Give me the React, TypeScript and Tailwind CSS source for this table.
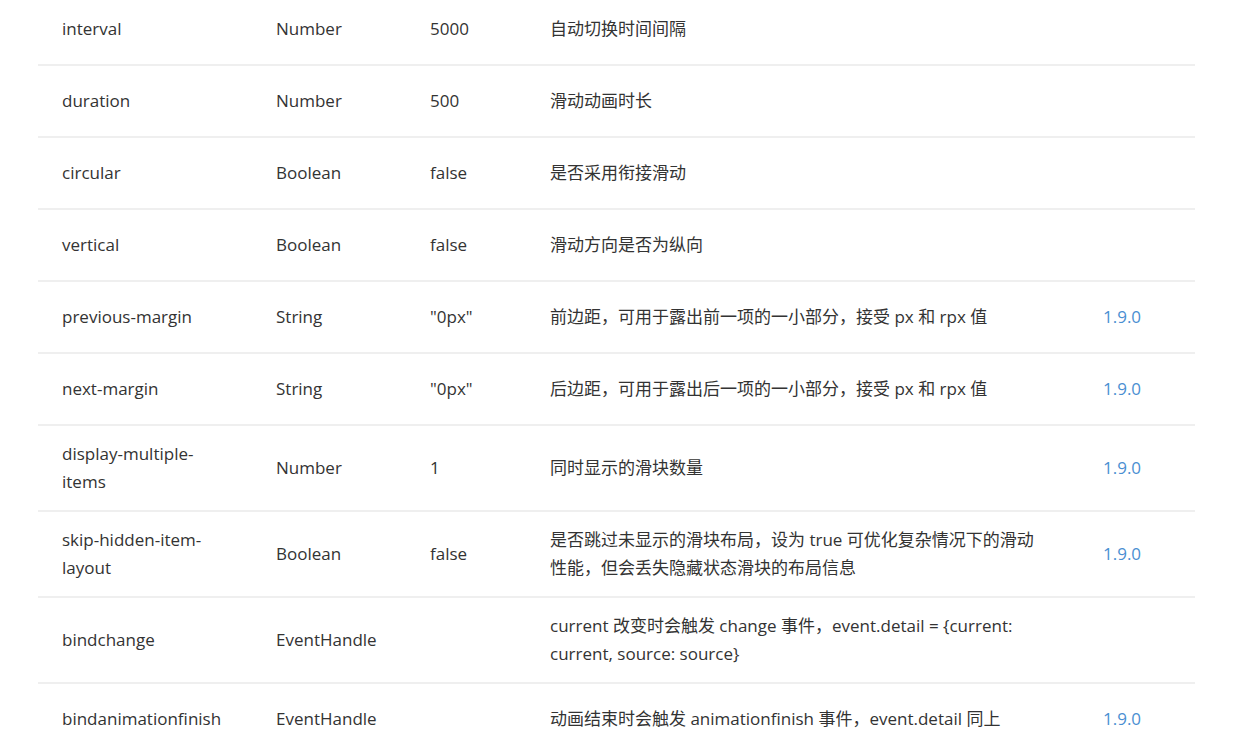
const rows = [
  { name: "interval", type: "Number", def: "5000", desc: "自动切换时间间隔", ver: "" },
  { name: "duration", type: "Number", def: "500", desc: "滑动动画时长", ver: "" },
  { name: "circular", type: "Boolean", def: "false", desc: "是否采用衔接滑动", ver: "" },
  { name: "vertical", type: "Boolean", def: "false", desc: "滑动方向是否为纵向", ver: "" },
  {
    name: "previous-margin",
    type: "String",
    def: '"0px"',
    desc: "前边距，可用于露出前一项的一小部分，接受 px 和 rpx 值",
    ver: "1.9.0",
  },
  {
    name: "next-margin",
    type: "String",
    def: '"0px"',
    desc: "后边距，可用于露出后一项的一小部分，接受 px 和 rpx 值",
    ver: "1.9.0",
  },
  { name: "display-multiple-items", type: "Number", def: "1", desc: "同时显示的滑块数量", ver: "1.9.0" },
  {
    name: "skip-hidden-item-layout",
    type: "Boolean",
    def: "false",
    desc: "是否跳过未显示的滑块布局，设为 true 可优化复杂情况下的滑动性能，但会丢失隐藏状态滑块的布局信息",
    ver: "1.9.0",
  },
  {
    name: "bindchange",
    type: "EventHandle",
    def: "",
    desc: "current 改变时会触发 change 事件，event.detail = {current: current, source: source}",
    ver: "",
  },
  {
    name: "bindanimationfinish",
    type: "EventHandle",
    def: "",
    desc: "动画结束时会触发 animationfinish 事件，event.detail 同上",
    ver: "1.9.0",
  },
];

export default function App() {
  return (
    <div
      className="h-[738px] w-[1240px] overflow-hidden bg-white text-[17px] leading-[28px] text-[#333]"
      style={{ fontFamily: '"Open Sans", "Noto Sans CJK SC", sans-serif' }}
    >
      <div className="mx-[38px] -mt-[6px] w-[1157px]">
        {rows.map((r) => (
          <div
            key={r.name}
            className="grid min-h-[72px] grid-cols-[214px_154px_120px_553px_1fr] items-center border-b-2 border-[#efefef] py-[14px]"
          >
            <div className="pl-[24px] pr-[20px]">{r.name}</div>
            <div className="pl-[24px]">{r.type}</div>
            <div className="pl-[24px]">{r.def}</div>
            <div className="pl-[24px] pr-[30px]">{r.desc}</div>
            <div className="pl-[24px] text-[#4a8fd2]">{r.ver}</div>
          </div>
        ))}
      </div>
    </div>
  );
}
